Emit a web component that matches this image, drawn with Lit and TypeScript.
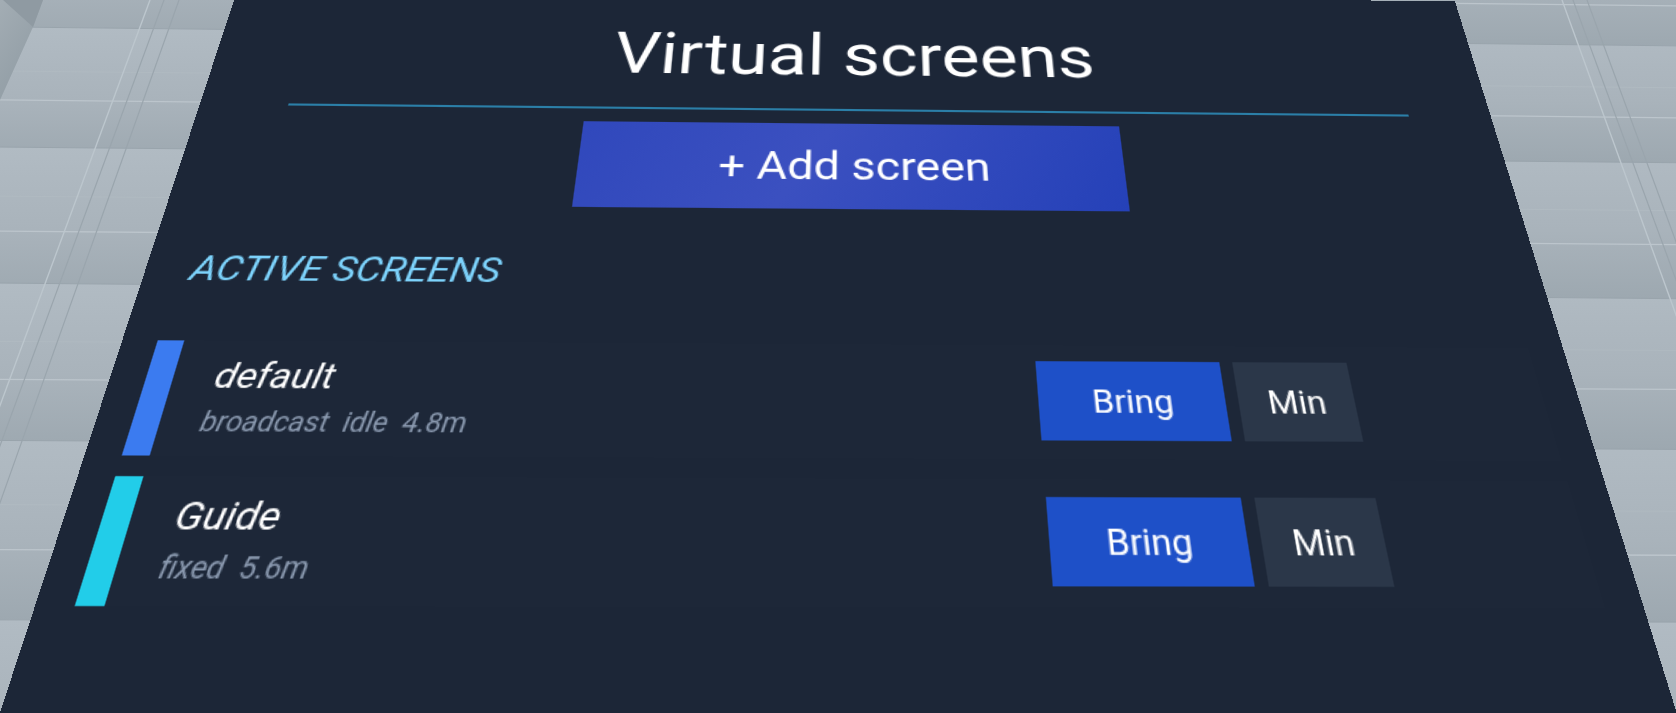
import { LitElement, html, css, svg } from "lit";
import { customElement } from "lit/decorators.js";

type P = [number, number];

function homography(w: number, h: number, tl: P, tr: P, bl: P, br: P): string {
  const dx1 = tr[0] - br[0], dx2 = bl[0] - br[0], sx = tl[0] - tr[0] + br[0] - bl[0];
  const dy1 = tr[1] - br[1], dy2 = bl[1] - br[1], sy = tl[1] - tr[1] + br[1] - bl[1];
  const det = dx1 * dy2 - dx2 * dy1;
  const g = (sx * dy2 - dx2 * sy) / det;
  const k = (dx1 * sy - sx * dy1) / det;
  const a = tr[0] - tl[0] + g * tr[0], b = bl[0] - tl[0] + k * bl[0], c = tl[0];
  const d = tr[1] - tl[1] + g * tr[1], e = bl[1] - tl[1] + k * bl[1], f = tl[1];
  const m = [a / w, d / w, 0, g / w, b / h, e / h, 0, k / h, 0, 0, 1, 0, c, f, 0, 1];
  return `matrix3d(${m.map((n) => n.toFixed(9)).join(",")})`;
}

// wall seams as [y at x=100, y at x=1600]
const hard: P[] = [[-95, -75], [28, 45], [148, 162], [284, 298], [441, 449], [620, 622], [800, 800]];
const soft: P[] = [[72, 87], [197, 210], [342, 350], [505, 511], [712, 712]];
const light: P[] = [[-11, 5], [101, 117], [232, 244], [380, 389], [550, 555]];
const yAt = (s: P, x: number) => s[0] + ((s[1] - s[0]) * (x - 100)) / 1500;

const rails = [
  { x0: 150, k: -0.37, c: "#bcc6cd", w: 1.4 },
  { x0: 164, k: -0.368, c: "#9aa5ad", w: 1.2 },
  { x0: 179, k: -0.356, c: "#9aa5ad", w: 1.2 },
  { x0: 1562, k: 0.362, c: "#bcc6cd", w: 1.4 },
  { x0: 1573, k: 0.368, c: "#9aa5ad", w: 1.2 },
  { x0: 1587, k: 0.368, c: "#9aa5ad", w: 1.2 },
];

@customElement("app-root")
export class AppRoot extends LitElement {
  static styles = css`
    :host {
      display: block;
      position: relative;
      width: 100vw;
      height: 713px;
      overflow: hidden;
      background: #a8b2ba;
      font-family: Roboto, "Liberation Sans", sans-serif;
    }
    .wall {
      position: absolute;
      inset: 0;
      width: 100%;
      height: 100%;
    }
    .panel {
      position: absolute;
      left: 0;
      top: 0;
      width: 1000px;
      height: 660px;
      box-sizing: border-box;
      transform-origin: 0 0;
      background: #1c2637;
      color: #fff;
      display: flex;
      flex-direction: column;
      padding: 0 25px 0 24px;
    }
    h1 {
      margin: 19.5px 0 0 4.5px;
      height: 88px;
      line-height: 88px;
      font-size: 57.4px;
      font-weight: 400;
      text-align: center;
    }
    .rule {
      height: 2px;
      margin: 8.2px 40.5px 0 42.5px;
      background: #2b7fa8;
    }
    .add {
      align-self: center;
      margin: 12.8px 0 0 0.6px;
      width: 412px;
      height: 76.5px;
      padding: 1.5px 0 0 4px;
      box-sizing: border-box;
      display: flex;
      align-items: center;
      justify-content: center;
      font-size: 35.2px;
      background: linear-gradient(120deg, #3048bc 0%, #3b50c0 42%, #2541b8 100%);
    }
    .section {
      margin: 36px 0 0 8px;
      height: 36px;
      line-height: 36px;
      font-size: 28.4px;
      font-style: italic;
      color: #7dd3fc;
    }
    .list {
      display: flex;
      flex-direction: column;
      gap: 14px;
      margin-top: 38px;
    }
    .row {
      height: 83px;
      display: flex;
      align-items: center;
      background: #1d2738;
      padding-right: 131px;
    }
    .bar {
      width: 18px;
      align-self: stretch;
    }
    .bar.blue {
      background: #3b7bf0;
    }
    .bar.cyan {
      background: #22cde9;
    }
    .info {
      flex: 1;
      padding-left: 28px;
      display: flex;
      flex-direction: column;
      gap: 4px;
      font-style: italic;
    }
    .name {
      font-size: 26.5px;
      line-height: 34px;
    }
    .meta {
      display: flex;
      gap: 9.6px;
      margin-left: -1px;
      font-size: 19.3px;
      line-height: 26px;
      color: #8b9ab0;
    }
    .actions {
      display: flex;
      gap: 9.5px;
    }
    .btn {
      height: 58px;
      box-sizing: border-box;
      padding-top: 1.5px;
      display: flex;
      align-items: center;
      justify-content: center;
      font-size: 24px;
    }
    .bring {
      width: 128px;
      padding-left: 2px;
      background: #1e50c8;
    }
    .min {
      width: 80px;
      background: #2b3749;
    }
  `;

  private transform = homography(1000, 497, [238.3, -13], [1455, 1.5], [35, 606], [1644, 608]);

  private wall() {
    return svg`
      <svg class="wall" viewBox="0 0 1676 713" preserveAspectRatio="none">
        <defs>
          <linearGradient id="band" x1="0" y1="0" x2="0" y2="1">
            <stop offset="0" stop-color="#b1bbc3"></stop>
            <stop offset="0.55" stop-color="#a9b3bb"></stop>
            <stop offset="1" stop-color="#9da8b0"></stop>
          </linearGradient>
          <linearGradient id="corner" x1="0" y1="0" x2="0.6" y2="1">
            <stop offset="0" stop-color="#a3adb4"></stop>
            <stop offset="1" stop-color="#8f9ba3"></stop>
          </linearGradient>
        </defs>
        ${hard.slice(0, -1).map((s, i) => {
          const n = hard[i + 1];
          return svg`<polygon fill="url(#band)" points="0,${yAt(s, 0)} 1676,${yAt(s, 1676)} 1676,${yAt(n, 1676)} 0,${yAt(n, 0)}"></polygon>
            <line x1="0" y1=${yAt(s, 0)} x2="1676" y2=${yAt(s, 1676)} stroke="#99a4ac" stroke-width="1"></line>`;
        })}
        ${soft.map(
          (s) => svg`<line x1="0" y1=${yAt(s, 0)} x2="1676" y2=${yAt(s, 1676)} stroke="#b0bac1" stroke-width="1"></line>`
        )}
        ${light.map(
          (s) => svg`<line x1="0" y1=${yAt(s, 0)} x2="1676" y2=${yAt(s, 1676)} stroke="#bcc5cc" stroke-width="1.3"></line>`
        )}
        ${rails.map(
          (r) => svg`<line x1=${r.x0} y1="0" x2=${r.x0 + r.k * 713} y2="713" stroke=${r.c} stroke-width=${r.w}></line>`
        )}
        <polygon points="0,0 43,0 33,27 0,100" fill="url(#corner)"></polygon>
        <polygon points="3,0 43,0 33,27" fill="#8f9aa2"></polygon>
      </svg>
    `;
  }

  render() {
    return html`
      ${this.wall()}
      <section class="panel" style="transform:${this.transform}">
        <h1>Virtual screens</h1>
        <div class="rule"></div>
        <div class="add">+ Add screen</div>
        <div class="section">ACTIVE SCREENS</div>
        <div class="list">
          <div class="row">
            <div class="bar blue"></div>
            <div class="info">
              <div class="name">default</div>
              <div class="meta"><span>broadcast</span><span>idle</span><span>4.8m</span></div>
            </div>
            <div class="actions">
              <div class="btn bring">Bring</div>
              <div class="btn min">Min</div>
            </div>
          </div>
          <div class="row">
            <div class="bar cyan"></div>
            <div class="info">
              <div class="name">Guide</div>
              <div class="meta"><span>fixed</span><span>5.6m</span></div>
            </div>
            <div class="actions">
              <div class="btn bring">Bring</div>
              <div class="btn min">Min</div>
            </div>
          </div>
        </div>
      </section>
    `;
  }
}
